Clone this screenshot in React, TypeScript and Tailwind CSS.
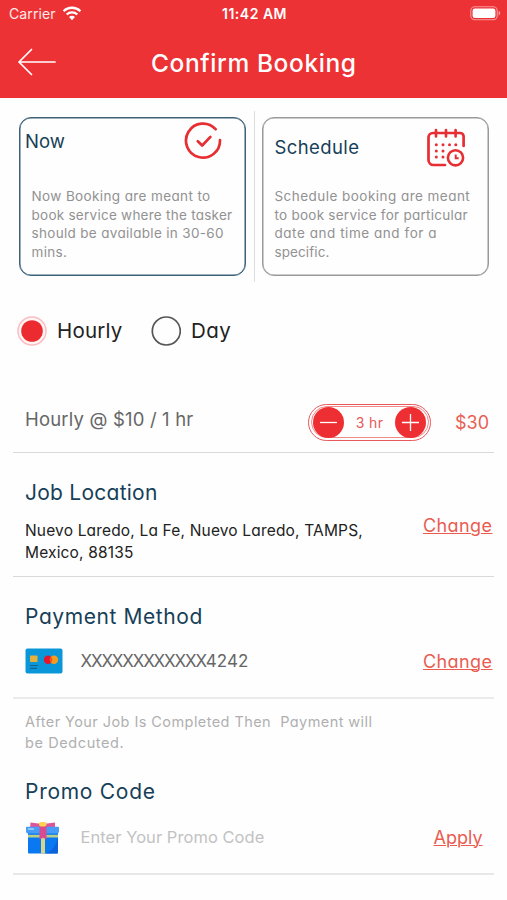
import React from "react";

function WifiIcon() {
  return (
    <svg width="20" height="15" viewBox="0 0 20 15" fill="none" stroke="#fff" strokeWidth="2.3">
      <path d="M1.6 5.2a12 12 0 0 1 16.8 0" />
      <path d="M4.7 8.5a7.6 7.6 0 0 1 10.6 0" />
      <path d="M10 14.2 7 11.1a4.3 4.3 0 0 1 6 0z" fill="#fff" stroke="none" />
    </svg>
  );
}

function BatteryIcon() {
  return (
    <svg width="31" height="15" viewBox="0 0 31 15">
      <rect x="0.8" y="0.8" width="26.4" height="13" rx="4" fill="none" stroke="#fff" strokeOpacity="0.5" strokeWidth="1.1" />
      <rect x="2.6" y="2.6" width="22.8" height="9.4" rx="2.2" fill="#fff" />
      <path d="M28.600 5v4.400c1-.4 1.600-1.200 1.600-2.200s-.6-1.800-1.600-2.200z" fill="#fff" fillOpacity="0.55" />
    </svg>
  );
}

function CheckIcon() {
  return (
    <svg width="38" height="38" viewBox="0 0 38 38" fill="none" stroke="#e62e33" strokeWidth="2.7" strokeLinecap="round" strokeLinejoin="round">
      <path d="M31.600 7.200A17 17 0 1 0 36 18.200" />
      <path d="m13.800 19.200 4.400 4.300 8.200-8.600" />
    </svg>
  );
}

function CalendarIcon() {
  return (
    <svg width="40" height="40" viewBox="0 0 40 40" fill="none" stroke="#e62e33" strokeWidth="2.700" strokeLinecap="round">
      <path d="M19 37H7.500a5 5 0 0 1-5-5V9.500a4.500 4.500 0 0 1 4.500-4.500h27a3.600 3.600 0 0 1 3.600 3.600V18" />
      <path d="M10 2v6.500M20 2v6.500M29.600 2v6.500" strokeWidth="2.600" />
      <g fill="#e62e33" stroke="none">
        <circle cx="10.300" cy="16.700" r="1.500" /><circle cx="17" cy="16.700" r="1.500" /><circle cx="23.500" cy="16.700" r="1.500" /><circle cx="29.800" cy="16.700" r="1.500" />
        <circle cx="10.300" cy="23" r="1.500" /><circle cx="17" cy="23" r="1.500" />
        <circle cx="10.300" cy="29" r="1.500" /><circle cx="17" cy="29" r="1.500" />
      </g>
      <circle cx="29.500" cy="29.800" r="7.600" strokeWidth="2.600" />
      <path d="M29.700 26.500v3.700h3" strokeWidth="2" strokeLinecap="butt" />
    </svg>
  );
}

function CardIcon() {
  return (
    <svg width="38" height="26" viewBox="0 0 38 26">
      <rect x="0.500" y="0.500" width="37" height="25" rx="2" fill="#0a97da" />
      <rect x="5" y="7.500" width="7.500" height="6.500" rx="0.800" fill="#e5b13a" />
      <path d="M5 17.500h8M5 20.300h7" stroke="#17618f" strokeWidth="1.200" />
      <circle cx="23" cy="11.800" r="4.200" fill="#e2152c" />
      <circle cx="29" cy="11.800" r="4.200" fill="#f59c1f" />
      <path d="M26 8.860a4.200 4.200 0 0 1 0 5.880a4.200 4.200 0 0 1 0-5.880z" fill="#f05a1c" />
    </svg>
  );
}

function GiftIcon() {
  return (
    <svg width="36" height="34" viewBox="0 0 36 34">
      <path d="M3 12h30v19.500a1 1 0 0 1-1 1H4a1 1 0 0 1-1-1z" fill="#0a78f0" />
      <path d="M33 16v15.500a1 1 0 0 1-1 1H19.500C27 31 31 25 33 16z" fill="#0c62da" />
      <path d="M5.500 1.500 17 3v6H5zM30 1.500 18 3v6h12z" fill="#dc559b" />
      <path d="M1.800 5.800h31.400a.8.800 0 0 1 .8.800v3.900a2 2 0 0 1-2 2H3a2 2 0 0 1-2-2V6.600a.8.800 0 0 1 .8-.8z" fill="#479cf8" />
      <path d="M3 13.800h30v2.700H3z" fill="#b8cf88" />
      <path d="M16 13h4v19.500h-4z" fill="#d8d58b" />
      <path d="M14.500 4h7v14.500l-3.500-1.700-3.500 1.700z" fill="#d94b91" />
      <rect x="14" y="1" width="7.500" height="4.500" rx="2" fill="#ffd34f" />
      <path d="M3.500 8h5" stroke="#a6d1ff" strokeWidth="1.400" strokeLinecap="round" />
    </svg>
  );
}

const heading = "text-[21px] leading-[30px] text-[#173f58]";
const link = "text-[18px] leading-[26px] text-[#ea5c50] underline decoration-1 underline-offset-[1px]";

export default function App() {
  return (
    <div className="h-[900px] w-[507px] overflow-hidden whitespace-nowrap bg-[#fefefe] font-['Inter','Open_Sans',sans-serif] [font-feature-settings:'cv11']">
      <header className="h-[98px] bg-[#ed3235] text-white">
        <div className="grid h-[27px] grid-cols-3 items-center pl-[9px] pr-[6px]">
          <div className="flex items-center gap-[6px] text-[14px] tracking-[0.100px] text-white/90 [font-feature-settings:normal]">
            <span>Carrier</span>
            <WifiIcon />
          </div>
          <div className="pr-px text-center text-[14px] font-semibold tracking-[0.500px]">11:42 AM</div>
          <div className="flex justify-end"><BatteryIcon /></div>
        </div>
        <div className="flex h-[70px] items-center pl-[17px]">
          <svg width="40" height="30" viewBox="0 0 40 30" fill="none" stroke="#fff" strokeWidth="1.700" strokeLinecap="round" strokeLinejoin="round">
            <path d="M14.500 2.500 2 15l12.500 12.500M2 15h36" />
          </svg>
          <h1 className="ml-[94px] pt-[2px] text-[24.500px] font-medium tracking-[0.600px]">Confirm Booking</h1>
        </div>
      </header>

      <section className="flex h-[184px] items-start pl-[19px] pt-[13px]">
        <div className="mt-[6px] h-[159px] w-[227px] rounded-[12px] border border-[#3b6078] pt-1 shadow-[inset_0_0_0_0.5px_#3b6078]">
          <div className="flex h-[65px] items-start justify-between pl-[5px] pr-[23px]">
            <h2 className="pt-[6px] text-[18.500px] leading-[26px] text-[#173f58]">Now</h2>
            <CheckIcon />
          </div>
          <p className="pl-[11.500px] text-[13.500px] leading-[18.670px] tracking-[0.320px] text-[#929292]">
            <span className="tracking-[0.380px]">Now Booking are meant to</span><br />
            <span className="tracking-[0.260px]">book service where the tasker</span><br />
            should be available in 30-60<br />mins.
          </p>
        </div>
        <div className="ml-2 h-[171px] w-px bg-[#dedede]" />
        <div className="ml-[7px] mt-[6px] h-[159px] w-[227px] rounded-[12px] border border-[#999] pt-1 shadow-[inset_0_0_0_0.5px_#999]">
          <div className="flex h-[65px] items-start justify-between pl-[11.500px] pr-[22px]">
            <h2 className="pt-[12px] text-[18.500px] leading-[26px] tracking-[0.400px] text-[#173f58]">Schedule</h2>
            <div className="pt-[6px]"><CalendarIcon /></div>
          </div>
          <p className="pl-[11.500px] text-[13.500px] leading-[18.670px] text-[#929292]">
            <span className="tracking-[0.460px]">Schedule booking are meant</span><br />
            <span className="tracking-[0.250px]">to book service for particular</span><br />
            <span className="tracking-[0.540px]">date and time and for a</span><br />
            <span className="tracking-[0.100px]">specific.</span>
          </p>
        </div>
      </section>

      <div className="flex h-[97px] items-center pl-[17px] text-[20.500px] text-[#222]">
        <svg width="30" height="30" viewBox="0 0 30 30">
          <circle cx="15" cy="15" r="14" fill="#fff5f5" stroke="#f9bfc2" strokeWidth="1.500" />
          <circle cx="15" cy="15" r="10.800" fill="#ec2b30" />
        </svg>
        <span className="ml-[10px] w-[94px] pt-px tracking-[0.200px]">Hourly</span>
        <svg width="30" height="30" viewBox="0 0 30 30">
          <circle cx="15.300" cy="15" r="14" fill="none" stroke="#555" strokeWidth="1.700" />
        </svg>
        <span className="ml-[10px] pt-px tracking-[0.500px]">Day</span>
      </div>

      <section className="mx-[13px] flex h-[74px] items-center border-b border-[#d9d9d9] pl-3 pt-[13px]">
        <div className="w-[283px] pb-[5px] text-[18.500px] tracking-[0.180px] text-[#666]">Hourly @ $10 / 1 hr</div>
        <div className="h-[37px] w-[123px] rounded-full border border-[#e8595b] p-[1.500px]">
          <div className="flex h-full items-center justify-between rounded-full border border-[#f08a8b] px-px text-[14px] tracking-[0.400px] text-[#e45a5a]">
            <svg width="31" height="31" viewBox="0 0 31 31"><circle cx="15.500" cy="15.500" r="15.500" fill="#ed2f33" /><path d="M7 15.500h17" stroke="#fff" strokeWidth="1.300" /></svg>
            <span>3 hr</span>
            <svg width="31" height="31" viewBox="0 0 31 31"><circle cx="15.500" cy="15.500" r="15.500" fill="#ed2f33" /><path d="M7 15.500h17M15.500 7v17" stroke="#fff" strokeWidth="1.300" /></svg>
          </div>
        </div>
        <div className="ml-6 pt-px text-[18px] text-[#e95f56]">$30</div>
      </section>

      <section className="mx-[13px] flex h-[124px] border-b border-[#d9d9d9] pl-3 pt-[25px]">
        <div className="w-[398px]">
          <h2 className={heading + " tracking-[0.250px]"}>Job Location</h2>
          <p className="mt-[12px] text-[15.500px] leading-[22px] tracking-[0.170px] text-[#222]">
            Nuevo Laredo, La Fe, Nuevo Laredo, TAMPS,<br />Mexico, 88135
          </p>
        </div>
        <div className="pt-[35px]"><a className={link + " tracking-[0.400px]"}>Change</a></div>
      </section>

      <section className="mx-[13px] h-[122px] border-b-2 border-[#eaeaea] pl-3 pt-[25px]">
        <h2 className={heading + " tracking-[0.580px]"}>Payment Method</h2>
        <div className="mt-[16px] flex h-[26px] items-center">
          <CardIcon />
          <span className="ml-[17.500px] w-[342.500px] pt-[2px] text-[17px] text-[#666]"><span className="tracking-[-1.150px]">XXXXXXXXXXXX</span>4242</span>
          <a className={link + " pt-px tracking-[0.400px]"}>Change</a>
        </div>
      </section>

      <section className="mx-[13px] h-[176px] border-b-2 border-[#e8e8e8] pl-3 pt-[13px]">
        <p className="whitespace-pre text-[14.500px] leading-[20.500px] tracking-[0.600px] text-[#b0b0b0]"><span className="tracking-[0.430px]">{"After Your Job Is Completed Then  Payment will\n"}</span>be Dedcuted.</p>
        <h2 className={"mt-[24px] tracking-[0.720px] " + heading}>Promo Code</h2>
        <div className="mt-[13px] flex h-[36px] items-center">
          <GiftIcon />
          <span className="ml-[19.500px] w-[353px] pb-[2px] text-[16.500px] tracking-[0.050px] text-[#c2c2c2]">Enter Your Promo Code</span>
          <a className={link}>Apply</a>
        </div>
      </section>
    </div>
  );
}
